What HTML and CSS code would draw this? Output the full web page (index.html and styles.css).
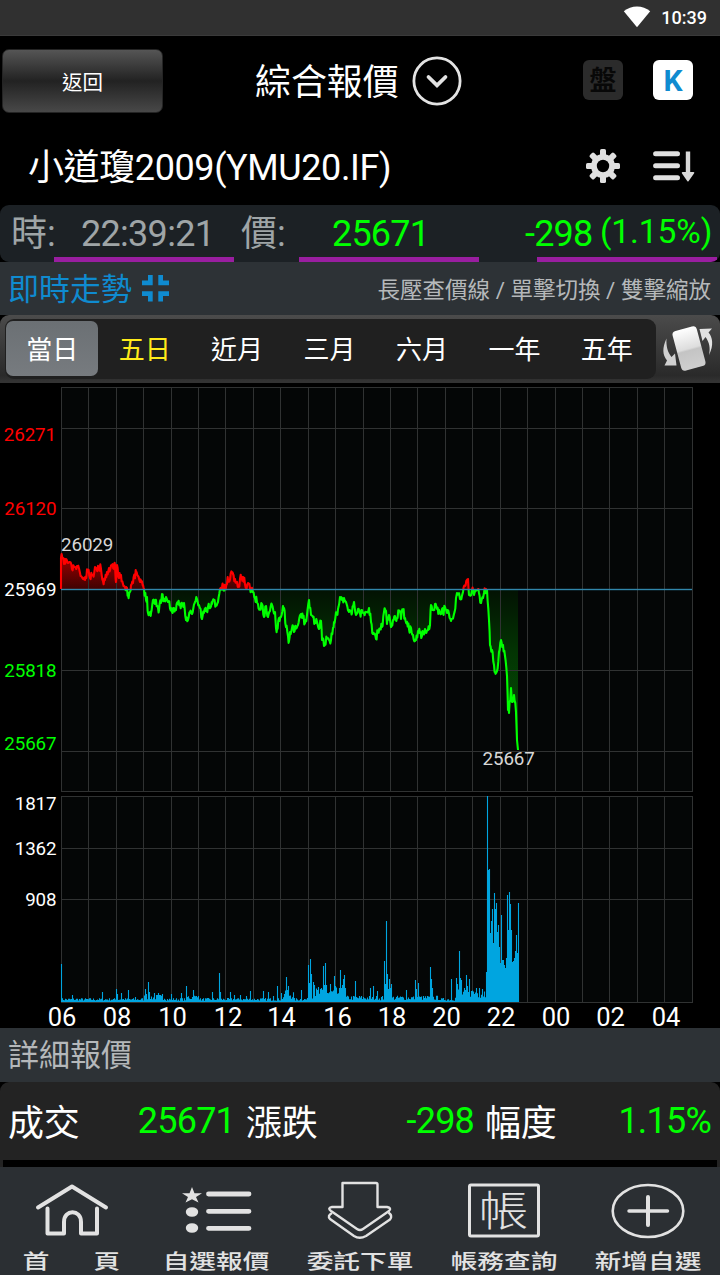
FILE: index.html
```html
<!DOCTYPE html>
<html lang="zh-Hant">
<head>
<meta charset="utf-8">
<title>綜合報價</title>
<link rel="stylesheet" href="styles.css">
</head>
<body>
<div class="status">
  <svg class="wifi" width="28" height="22" viewBox="0 0 28 22"><path d="M0.8 5.2C8-1.2 20-1.2 27.2 5.2L14 21.2Z" fill="#fff"/></svg>
  <span>10:39</span>
</div>
<header class="top">
  <button class="back">返回</button>
  <div class="heading"><span>綜合報價</span>
    <svg width="50" height="50" viewBox="0 0 50 50" fill="none" stroke="#e3e3e3"><circle cx="25" cy="25" r="23.1" stroke-width="2.8"/><path d="M16.500 21L25 29.300L33.500 21" stroke-width="3.8" stroke-linecap="round"/></svg>
  </div>
  <div class="chips"><span class="chip off">盤</span><span class="chip on">K</span></div>
</header>
<div class="symbol">
  <span class="name">小道瓊2009(YMU20.IF)</span>
  <svg class="gear" width="34" height="34" viewBox="-17 -17 34 34" fill="#e0e0e0">
    <g id="g"><rect x="-3" y="-17" width="6" height="34" rx="1.6"/><rect x="-17" y="-3" width="34" height="6" rx="1.6"/></g>
    <use href="#g" transform="rotate(45)"/><circle r="12"/><circle r="6.2" fill="#000"/>
  </svg>
  <svg class="sort" width="42" height="31" viewBox="0 0 42 31"><path d="M2.6 2.7H24.5M2.6 14.7H24.5M2.6 26.7H24.5" stroke="#e0e0e0" stroke-width="5" stroke-linecap="round"/><path d="M32.8 .5H37.2V21H40.5Q42 21 41 22.5L35.5 30.2Q35 30.7 34.4 30.2L29 22.5Q28.2 21 29.6 21H32.8Z" fill="#d8d8d8"/></svg>
</div>
<div class="quote">
  <span class="q1">時:</span><span class="q2">22:39:21</span><span class="q3">價:</span><span class="q4 up">25671</span><span class="q5 up">-298</span><span class="q6 up">(1.15%)</span>
</div>
<div class="trend">
  <span class="blue">即時走勢</span>
  <svg width="27" height="27" viewBox="0 0 27 27" fill="#0f8bd0"><path d="M6 0H10.7V10.3H0V5.6H6ZM16.3 0H21V5.6H27V10.3H16.3ZM0 16.3H10.7V26.6H6V21H0ZM16.3 16.3H27V21H21V26.6H16.3Z"/></svg>
  <span class="hint">長壓查價線 / 單擊切換 / 雙擊縮放</span>
</div>
<nav class="tabs">
  <div class="ranges"><span class="sel">當日</span><span class="yellow">五日</span><span>近月</span><span>三月</span><span>六月</span><span>一年</span><span>五年</span></div>
  <svg width="52" height="50" viewBox="0 0 52 50">
    <defs><linearGradient id="phone" x2="0" y2="1"><stop offset="0" stop-color="#fff"/><stop offset=".5" stop-color="#ddd"/><stop offset=".55" stop-color="#c4c4c4"/><stop offset="1" stop-color="#cfcfcf"/></linearGradient></defs>
    <rect x="14.500" y="5" width="25" height="41" rx="4" transform="rotate(-15 27 25.500)" fill="url(#phone)"/>
    <path d="M4.500 15.500C0 25 .5 32 5 37.500L2.500 42.500L14.500 42.500L13 30.500L9.500 34C5.500 29 4 23 4.500 15.500Z" fill="#d0d0d0"/>
    <path d="M47 32C52 22 50.500 14 46.500 9.500L50 5.500L37.500 6L40.500 18L43.500 14C47.500 19.500 48.500 25 47 32Z" fill="#e2e2e2"/>
  </svg>
</nav>
<svg class="chart" width="720" height="645" viewBox="0 383 720 645">
  <defs>
    <linearGradient id="rise" gradientUnits="userSpaceOnUse" x1="0" y1="558" x2="0" y2="589"><stop offset="0" stop-color="#900"/><stop offset="1" stop-color="#400202"/></linearGradient>
    <linearGradient id="fall" gradientUnits="userSpaceOnUse" x1="0" y1="589" x2="0" y2="751"><stop offset="0" stop-color="#031203"/><stop offset=".4" stop-color="#033503"/><stop offset="1" stop-color="#055505"/></linearGradient>
    <clipPath id="above"><rect x="50" y="383" width="660" height="206.500"/></clipPath>
    <clipPath id="below"><rect x="50" y="589.500" width="660" height="165"/></clipPath>
  </defs>
  <rect x="61" y="387" width="632" height="405" fill="#040606"/>
  <rect x="61" y="796" width="632" height="207" fill="#040606"/>
  <path id="fillUp" fill="url(#rise)" clip-path="url(#above)"/>
  <path id="fillDown" fill="url(#fall)" clip-path="url(#below)"/>
  <path id="grid" stroke="#303232" fill="none"/>
  <path id="lineUp" class="line" stroke="#f00" clip-path="url(#above)"/>
  <path id="lineDown" class="line" stroke="#0f0" clip-path="url(#below)"/>
  <rect class="base" x="61" y="588.800" width="631" height="1.400"/>
  <path id="volume" stroke="#00a5e0" stroke-width="1.100"/>
  <g class="axis" text-anchor="end">
    <text x="56" y="441" fill="#f00">26271</text><text x="56.500" y="514.500" fill="#f00">26120</text><text x="56.500" y="595.500">25969</text><text x="56.500" y="676.500" fill="#0f0">25818</text><text x="56.500" y="749.500" fill="#0f0">25667</text>
    <text x="56.500" y="809.500">1817</text><text x="56.500" y="854.500">1362</text><text x="56.500" y="906">908</text>
  </g>
  <g class="axis note"><text x="61" y="551">26029</text><text x="482.500" y="765">25667</text></g>
  <g class="hours" text-anchor="middle"><text x="62" y="1026">06</text><text x="117" y="1026">08</text><text x="172.500" y="1026">10</text><text x="228" y="1026">12</text><text x="281.500" y="1026">14</text><text x="337.500" y="1026">16</text><text x="392" y="1026">18</text><text x="446.500" y="1026">20</text><text x="501" y="1026">22</text><text x="556" y="1026">00</text><text x="610.500" y="1026">02</text><text x="666" y="1026">04</text></g>
</svg>
<div class="section">詳細報價</div>
<div class="detail">
  <span class="k">成交</span><span class="v">25671</span><span class="k">漲跌</span><span class="v">-298</span><span class="k">幅度</span><span class="v">1.15%</span>
</div>
<footer class="bottom">
  <div class="item"><svg width="80" height="62" viewBox="0 0 80 62"><g fill="none" stroke="#e2e2e2" stroke-width="4" stroke-linejoin="round" stroke-linecap="round"><path d="M6 27.500L40 6.500L74 27.500"/><path d="M15.500 28.500V53.500H32V42C32 29 49 29 49 42V53.500H65V28.500"/></g></svg><span class="home"><b>首</b><b>頁</b></span></div>
  <div class="item"><svg width="80" height="62" viewBox="0 0 80 62" fill="#e2e2e2"><path d="M16 7L18.500 13.300H26L20 17L22.500 22.500L16 19.300L9.500 22.500L12 17L6 13.300H13.500Z"/><ellipse cx="16" cy="32" rx="6.200" ry="4.800"/><ellipse cx="16" cy="48" rx="6.200" ry="4.800"/><path d="M32.500 14H73M32.500 31.300H73M32.500 48.300H73" stroke="#e2e2e2" stroke-width="4.800" stroke-linecap="round"/></svg><span>自選報價</span></div>
  <div class="item"><svg width="80" height="62" viewBox="0 0 80 62" fill="none" stroke="#e2e2e2" stroke-width="2.400" stroke-linejoin="round"><path d="M22.500 3H56Q57.500 3 57.500 4.500V27H67Q72 28 69 31L43 49Q40 51 37 49L11 31Q7 28 12 27H22.500Z"/><path d="M12 33Q7 36 10 39L34 56Q39.500 59.500 46 56L70 39.500Q73 36 68.500 32.500"/></svg><span>委託下單</span></div>
  <div class="item"><svg width="80" height="62" viewBox="0 0 80 62"><rect x="5.500" y="5" width="69" height="51" rx="1.500" fill="none" stroke="#e2e2e2" stroke-width="3"/><text class="book" x="14.500" y="46" textLength="50" lengthAdjust="spacingAndGlyphs">帳</text></svg><span>帳務查詢</span></div>
  <div class="item"><svg width="80" height="62" viewBox="0 0 80 62" fill="none" stroke="#e2e2e2" stroke-linecap="round"><ellipse cx="40" cy="31" rx="35.300" ry="26" stroke-width="2.600"/><path d="M21 31H59.500" stroke-width="3.500"/><path d="M40 17V45" stroke-width="4"/></svg><span>新增自選</span></div>
</footer>
<script src="chart.js"></script>
</body>
</html>
```
FILE: styles.css
```css
* { box-sizing: border-box; }
body { margin: 0; width: 720px; height: 1275px; overflow: hidden; background: #000; color: #fff; font-family: Roboto, "Noto Sans CJK TC", sans-serif; }
svg { display: block; flex: none; }
span { white-space: nowrap; }

.status { height: 36px; background: #303030; border-bottom: 1px solid #3a3a3a; display: flex; align-items: center; justify-content: flex-end; padding-right: 13px; gap: 10px; font-size: 18px; font-weight: 500; }
.wifi { margin-top: -2px; }

.top { height: 94px; display: grid; grid-template-columns: 255px 1fr 137px; align-items: center; padding-bottom: 5px; }
.back { width: 161px; height: 64px; margin-left: 2px; border: 1px solid #242424; border-radius: 7px; background: linear-gradient(#555, #222 50%, #484848); color: #fff; font: 20.5px Roboto, "Noto Sans CJK TC", sans-serif; }
.heading { display: flex; align-items: center; gap: 13px; font-size: 36px; line-height: 50px; }
.heading span { padding-top: 4px; letter-spacing: -0.1px; }
.chips { display: flex; gap: 30px; margin-top: -1px; }
.chip { width: 40px; height: 40px; border-radius: 6px; text-align: center; line-height: 42px; }
.off { background: #2b2b2b; color: #080808; font-size: 27px; font-weight: 700; }
.on { background: #fff; color: #0f8bd0; font-size: 30px; font-weight: 700; }

.symbol { height: 75px; display: flex; align-items: center; padding: 0 24px 3px 28px; }
.name { width: 558px; padding-top: 3px; font-size: 36px; line-height: 50px; letter-spacing: -0.4px; }
.sort { margin-left: 33px; }

.quote { height: 57px; border-radius: 9px; display: flex; line-height: 59px; font-size: 36px; color: #9fa5a7; background: linear-gradient(#991ea0, #991ea0) 54px 52px / 180px 5px no-repeat, linear-gradient(#991ea0, #991ea0) 299px 52px / 180px 5px no-repeat, linear-gradient(#991ea0, #991ea0) 537px 52px / 180px 5px no-repeat, #1c2125; }
.up, .v { color: #0f0; letter-spacing: -0.8px; }
.q1 { width: 80px; padding-left: 11px; }
.q2 { width: 161px; padding-left: 1px; letter-spacing: -0.7px; }
.q3 { width: 91px; }
.q4 { width: 193px; }
.q5 { width: 75px; }
.q6 { line-height: 54px; font-size: 33.5px; letter-spacing: -0.1px; }

.trend { height: 53px; background: #2d3236; display: flex; align-items: center; padding: 0 9px 0 8px; }
.blue { color: #0f8bd0; font-size: 31px; line-height: 50px; margin-right: 10px; padding-top: 2px; }
.hint { margin-left: auto; font-size: 22.500px; line-height: 50px; color: #b5b8ba; padding-top: 2px; }

.tabs { height: 68px; border-radius: 9px 9px 0 0; background: linear-gradient(#4b4b4b, #2a2a2a 92%, #333); display: flex; align-items: center; gap: 6px; padding-left: 5px; border-bottom: 2px solid #333; }
.ranges { width: 651px; height: 60px; margin-top: 2px; border-radius: 9px; background: #202020; display: flex; padding: 2px 1px; }
.ranges span { flex: none; width: 92.450px; height: 55px; text-align: center; font-size: 26px; line-height: 58px; }
.ranges .sel { background: linear-gradient(#6b7074, #777b7f); border-radius: 7px; }
.ranges .yellow { color: #ffeb1a; }

.chart { overflow: visible; }
.base { fill: #3186aa; }
.line { fill: none; stroke-width: 2.1; stroke-linejoin: round; }
.axis { font-size: 18.800px; letter-spacing: -0.1px; fill: #fff; }
.note { fill: #d8d8d8; }
.hours { font-size: 25.500px; fill: #fff; }

.section { height: 54px; padding-left: 8px; background: #2d3236; color: #b5b8ba; font-size: 31px; line-height: 56px; }
.detail { height: 85px; padding: 0 9px 7px 8px; display: grid; grid-template-columns: 71px 156px 82px 157px 78px 1fr; align-items: center; border-radius: 9px 9px 0 0; background: linear-gradient(#000, #000) 3px 78px / 714px 7px no-repeat, #232323; font-size: 36px; letter-spacing: -0.3px; line-height: 72px; }
.detail span { padding-top: 6px; }
.detail .v { text-align: right; padding-top: 0; }
.k:nth-child(n+2) { padding-left: 11px; }

.bottom { height: 108px; background: #2b2f33; display: grid; grid-template-columns: repeat(5, 144px); padding-top: 13px; }
.item { display: flex; flex-direction: column; align-items: center; gap: 3px; }
.item span { color: #e2e2e2; font-size: 20.500px; line-height: 34px; font-weight: 500; transform: scaleX(1.3); margin-left: -1px; }
.item .home { display: flex; gap: 34px; }
.home b { font-weight: 500; }
.book { font-size: 42px; fill: #e2e2e2; font-weight: 300; }
```
FILE: chart.js
```js
const $ = id => document.getElementById(id);

// Hour grid and price/volume levels
let grid = "";
for (let i = 0; i < 24; i++) {
  const x = Math.floor(61.3 + i * 27.43) + 0.5;
  grid += `M${x} 387V792M${x} 796V1003`;
}
for (const y of [387.5, 428.5, 508.5, 670.5, 751.5, 791.5, 796.5, 848.5, 899.5, 1002.5]) grid += `M61 ${y}H693`;
$("grid").setAttribute("d", grid);

// Price trace as x,y pairs
const price = `61,558 63,558 64,564 66,559 68,563 70,562 72,569 75,567 77,566 80,573 83,579 85,580 88,570 90,578 93,575 96,568 99,567 101,569 103,581 105,580 107,572 109,568 112,565 114,569 115,565 116,582 117,565 119,578 121,575 123,584 125,587 127,588 128,595 130,592 131,585 133,583 136,572 138,576 140,582 143,585 144,589 146,600 147,597 148,613 151,613 153,600 155,604 156,600 158,608 159,610 162,594 164,601 166,597 168,602 171,608 172,612 174,608 176,610 178,604 181,606 182,603 184,603 186,620 188,620 190,612 192,614 195,602 197,599 200,608 202,619 205,609 206,611 209,606 212,604 214,600 216,605 218,602 220,589 222,587 225,589 228,580 232,573 233,574 235,579 238,587 241,577 243,577 246,587 248,583 250,588 253,592 255,598 258,604 260,609 262,604 264,617 266,606 268,617 272,605 275,612 276,628 277,629 279,618 281,617 283,606 284,608 286,627 288,636 289,641 290,632 292,628 294,632 298,625 301,614 303,618 305,623 307,615 309,600 311,615 313,617 315,622 317,622 319,629 321,621 322,640 325,645 327,638 329,640 331,640 333,628 334,622 338,609 340,597 342,600 344,598 346,602 349,612 351,611 352,613 354,602 356,615 358,609 360,613 364,613 367,612 369,608 371,622 373,634 376,639 378,631 382,627 384,612 386,611 387,624 389,615 391,627 393,620 395,616 397,618 399,611 401,619 403,610 405,618 409,629 411,628 413,635 415,641 416,640 418,631 420,633 422,636 425,629 428,630 430,625 431,605 433,610 435,604 437,609 440,613 442,609 443,613 445,607 447,613 449,614 451,621 454,614 457,593 460,599 463,592 465,586 467,580 468,579 469,595 472,590 474,595 477,590 479,593 481,603 484,593 486,589 487,590 489,620 490,645 492,650 494,665 495,672 497,671 499,652 501,640 503,645 505,656 507,676 508,710 509,713 511,688 512,702 514,695 516,712 517,740 518,750`
  .split(" ").map(p => p.split(",").map(Number));

// One-minute ticks between the main readings, from a fixed sequence
let tick = 11;
const next = () => (tick = (tick * 16807) % 2147483647) / 2147483647;
const points = [];
price.forEach(([x, y], i) => {
  points.push(`${x} ${y}`);
  const after = price[i + 1];
  if (!after || x > 515) return;
  for (let s = x + 0.6; s < after[0] - 0.3; s += 0.7) {
    const t = (s - x) / (after[0] - x);
    points.push(`${s.toFixed(1)} ${(y + (after[1] - y) * t + (next() - 0.5) * 8).toFixed(1)}`);
  }
});
const path = points.join("L");
for (const id of ["lineUp", "lineDown"]) $(id).setAttribute("d", (id === "lineUp" ? "M61 589L" : "M") + path);
for (const id of ["fillUp", "fillDown"]) $(id).setAttribute("d", `M61 589L${path}L518 589Z`);

// Volume bars: tall readings by x, quiet minutes between them from a fixed sequence
const tops = {61:964,72:995,102:992,116:989,117:994,121:993,128:990,135:997,145:989,146:994,148:982,149:992,154:993,158:993,162:994,171:994,181:993,186:986,193:990,198:996,212:992,219:973,220:992,230:992,234:995,240:995,246:996,250:991,263:991,268:992,273:996,277:986,281:993,284:994,286:977,287:990,288:986,301:990,308:965,309:983,310:959,311:974,313:982,314:985,318:987,323:966,324:985,325:963,326:985,330:984,334:976,335:986,340:970,341:988,342:985,343:979,344:975,345:988,355:981,370:988,373:986,377:991,384:961,385:984,386:921,387:974,388:989,389:979,390:988,391:984,406:990,415:980,416:989,418:983,430:967,431:979,432:988,451:979,456:978,457:984,459:951,460:978,461:980,466:975,467:986,469:979,471:991,476:988,479:988,482:989};
const surge = [972,796,870,869,933,921,909,943,893,909,903,932,925,947,963,915,960,960,965,968,958,895,930,892,904,930,962,961,958,951,935,953,903];
let seed = 7, bars = "";
for (let x = 61; x <= 518; x++) {
  seed = (seed * 16807) % 2147483647;
  const r = seed / 2147483647;
  let base = 3.5;
  if (x > 143 && x < 166 || x > 186 && x < 200) base = 7;
  if (x > 282 && x < 294) base = 11;
  if (x > 307 && x < 346 || x > 454) base = 14;
  if (x > 345 && x < 440) base = 6;
  const top = x >= 486 ? surge[x - 486] : tops[x] || 1002 - 0.5 - base * (0.2 + 0.8 * r);
  bars += `M${x + 0.5} 1002V${top.toFixed(1)}`;
}
$("volume").setAttribute("d", bars);
```
